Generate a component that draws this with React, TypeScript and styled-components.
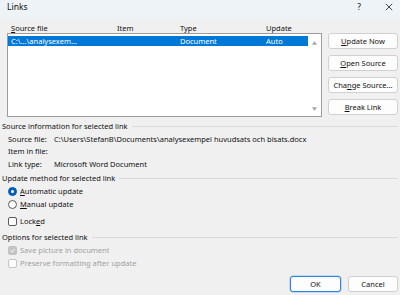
import styled, { createGlobalStyle } from "styled-components";

const GlobalStyle = createGlobalStyle`
  html, body {
    margin: 0;
    padding: 0;
    background: #f0f0f0;
  }
  body {
    font-family: "Noto Sans", "Liberation Sans", sans-serif;
    font-size: 7.5px;
    color: #111;
  }
`;

const columns = [
  { key: "source", label: "Source file", accel: 0, left: 4 },
  { key: "item", label: "Item", accel: -1, left: 110 },
  { key: "type", label: "Type", accel: -1, left: 173 },
  { key: "update", label: "Update", accel: -1, left: 259 },
];

const links = [
  { source: "C:\\...\\analysexem...", item: "", type: "Document", update: "Auto" },
];

const sideButtons = [
  { label: "Update Now", accel: 0 },
  { label: "Open Source", accel: 0 },
  { label: "Change Source...", accel: 3 },
  { label: "Break Link", accel: 0 },
];

// underline one letter, the way Windows shows access keys
const Accel = ({ text, at }: { text: string; at: number }) => {
  if (at < 0) return <span>{text}</span>;
  return (
    <span>
      {text.slice(0, at)}
      <u>{text[at]}</u>
      {text.slice(at + 1)}
    </span>
  );
};

const App = () => {
  return (
    <>
      <GlobalStyle />
      <Window>
        <TitleBar>
          <Title>Links</Title>
          <TitleActions>
            <Help>?</Help>
            <CloseIcon viewBox="0 0 10 10">
              <path d="M1 1 L9 9 M9 1 L1 9" stroke="#1a1a1a" strokeWidth="1" />
            </CloseIcon>
          </TitleActions>
        </TitleBar>

        <Body>
          <TopArea>
            <ListColumn>
              <HeaderRow>
                {columns.map((c) => (
                  <Cell key={c.key} style={{ left: c.left }}>
                    <Accel text={c.label} at={c.accel} />
                  </Cell>
                ))}
              </HeaderRow>
              <ListBox>
                <Rows>
                  {links.map((l, i) => (
                    <Row key={i} selected={i === 0}>
                      <Cell style={{ left: 3 }}>{l.source}</Cell>
                      <Cell style={{ left: 172 }}>{l.type}</Cell>
                      <Cell style={{ left: 258 }}>{l.update}</Cell>
                    </Row>
                  ))}
                </Rows>
                <ScrollBar>
                  <Arrow viewBox="0 0 6 4">
                    <path d="M0 4 L3 0 L6 4 Z" fill="#a3a3a3" />
                  </Arrow>
                  <Arrow viewBox="0 0 6 4">
                    <path d="M0 0 L3 4 L6 0 Z" fill="#a3a3a3" />
                  </Arrow>
                </ScrollBar>
              </ListBox>
            </ListColumn>
            <ButtonColumn>
              {sideButtons.map((b) => (
                <Button key={b.label}>
                  <Accel text={b.label} at={b.accel} />
                </Button>
              ))}
            </ButtonColumn>
          </TopArea>

          <GroupHeading gap={4}>
            <span>Source information for selected link</span>
            <Rule />
          </GroupHeading>
          <InfoList>
            <InfoRow>
              <InfoLabel>Source file:</InfoLabel>
              <span>C:\Users\StefanB\Documents\analysexempel huvudsats och bisats.docx</span>
            </InfoRow>
            <InfoRow>
              <InfoLabel>Item in file:</InfoLabel>
              <span></span>
            </InfoRow>
            <InfoRow>
              <InfoLabel>Link type:</InfoLabel>
              <span>Microsoft Word Document</span>
            </InfoRow>
          </InfoList>

          <GroupHeading gap={3}>
            <span>Update method for selected link</span>
            <Rule />
          </GroupHeading>
          <OptionList>
            <OptionRow>
              <Radio checked />
              <Accel text="Automatic update" at={0} />
            </OptionRow>
            <OptionRow>
              <Radio />
              <Accel text="Manual update" at={0} />
            </OptionRow>
          </OptionList>
          <LockedRow>
            <Check />
            <Accel text="Locked" at={4} />
          </LockedRow>

          <GroupHeading gap={4.5}>
            <span>Options for selected link</span>
            <Rule />
          </GroupHeading>
          <OptionList>
            <OptionRow disabled>
              <Check checked disabled>
                <svg viewBox="0 0 10 10" width="7" height="7">
                  <path d="M2 5.2 L4.2 7.4 L8 2.8" stroke="#fff" strokeWidth="1.3" fill="none" />
                </svg>
              </Check>
              <span>Save picture in document</span>
            </OptionRow>
            <OptionRow disabled>
              <Check disabled />
              <span>Preserve formatting after update</span>
            </OptionRow>
          </OptionList>

          <Footer>
            <Button primary>OK</Button>
            <Button>Cancel</Button>
          </Footer>
        </Body>
      </Window>
    </>
  );
};

const Window = styled.div`
  width: 400px;
  height: 295px;
  display: flex;
  flex-direction: column;
  overflow: hidden;
`;

const TitleBar = styled.div`
  height: 18px;
  background: #eef3f8;
  display: flex;
  align-items: flex-start;
  justify-content: space-between;
  padding: 2px 0 0 7px;
  box-sizing: border-box;
  line-height: 10px;
`;

const Title = styled.span`
  font-size: 8.5px;
`;

const TitleActions = styled.div`
  display: flex;
  align-items: center;
  gap: 24px;
  padding-right: 7px;
  height: 10px;
`;

const Help = styled.span`
  font-size: 8.5px;
`;

const CloseIcon = styled.svg`
  width: 8px;
  height: 8px;
`;

const Body = styled.div`
  flex: 1;
  display: flex;
  flex-direction: column;
  padding: 0 2px;
`;

const TopArea = styled.div`
  display: flex;
  padding-left: 5px;
`;

const ListColumn = styled.div`
  width: 315px;
  display: flex;
  flex-direction: column;
`;

const HeaderRow = styled.div`
  position: relative;
  height: 15px;
`;

const Cell = styled.span`
  position: absolute;
  bottom: 0.5px;
  line-height: 10px;
  white-space: nowrap;
`;

const ListBox = styled.div`
  height: 84px;
  box-sizing: border-box;
  border: 1px solid #9c9c9c;
  background: #fff;
  display: flex;
`;

const Rows = styled.div`
  flex: 1;
  padding-top: 2px;
`;

const Row = styled.div<{ selected?: boolean }>`
  position: relative;
  height: 10px;
  background: ${(p) => (p.selected ? "#0078d7" : "transparent")};
  color: ${(p) => (p.selected ? "#fff" : "inherit")};
`;

const ScrollBar = styled.div`
  width: 13px;
  display: flex;
  flex-direction: column;
  justify-content: space-between;
  align-items: center;
  padding: 7px 0 5px;
`;

const Arrow = styled.svg`
  width: 5px;
  height: 4px;
`;

const ButtonColumn = styled.div`
  margin-left: 6px;
  padding-top: 15px;
  width: 70px;
  display: flex;
  flex-direction: column;
  gap: 6px;
`;

const Button = styled.button<{ primary?: boolean }>`
  height: 16px;
  width: ${(p) => (p.primary ? "51px" : "auto")};
  min-width: 50px;
  padding: 0;
  border-radius: 3px;
  background: #fdfdfd;
  border: 1px solid ${(p) => (p.primary ? "#2f86d8" : "#d0d0d0")};
  box-shadow: ${(p) => (p.primary ? "0 0 0 0.5px #8fc1ee" : "none")};
  font-family: inherit;
  font-size: 7.5px;
  color: #111;
  line-height: 10px;
`;

const GroupHeading = styled.div<{ gap: number }>`
  margin-top: ${(p) => p.gap}px;
  display: flex;
  align-items: center;
  gap: 4px;
  line-height: 10px;
  white-space: nowrap;
`;

const Rule = styled.div`
  flex: 1;
  height: 1px;
  background: #dadada;
`;

const InfoList = styled.div`
  margin-top: 1.75px;
  padding-left: 6px;
`;

const InfoRow = styled.div`
  display: flex;
  height: 12.5px;
  line-height: 12.5px;
  white-space: nowrap;
`;

const InfoLabel = styled.span`
  width: 46px;
  flex-shrink: 0;
`;

const OptionList = styled.div`
  margin-top: 1.5px;
  padding-left: 6px;
`;

const OptionRow = styled.div<{ disabled?: boolean }>`
  display: flex;
  align-items: center;
  gap: 3px;
  height: 13px;
  color: ${(p) => (p.disabled ? "#a0a0a0" : "inherit")};
`;

const LockedRow = styled(OptionRow)`
  margin-top: 4px;
  padding-left: 6px;
`;

const Radio = styled.span<{ checked?: boolean }>`
  width: 9px;
  height: 9px;
  box-sizing: border-box;
  border-radius: 50%;
  border: 1px solid ${(p) => (p.checked ? "#005fb8" : "#5c5c5c")};
  background: ${(p) => (p.checked ? "#005fb8" : "#fff")};
  display: flex;
  align-items: center;
  justify-content: center;
  &::after {
    content: "";
    width: 3.5px;
    height: 3.5px;
    border-radius: 50%;
    background: #fff;
    display: ${(p) => (p.checked ? "block" : "none")};
  }
`;

const Check = styled.span<{ checked?: boolean; disabled?: boolean }>`
  width: 9px;
  height: 9px;
  box-sizing: border-box;
  border-radius: 2px;
  border: 1px solid ${(p) => (p.disabled ? "#c4c4c4" : "#5c5c5c")};
  background: ${(p) => (p.checked ? "#c4c4c4" : "#fff")};
  display: flex;
  align-items: center;
  justify-content: center;
`;

const Footer = styled.div`
  margin-top: auto;
  padding-bottom: 3px;
  display: flex;
  justify-content: flex-end;
  gap: 7px;
`;

export default App;
